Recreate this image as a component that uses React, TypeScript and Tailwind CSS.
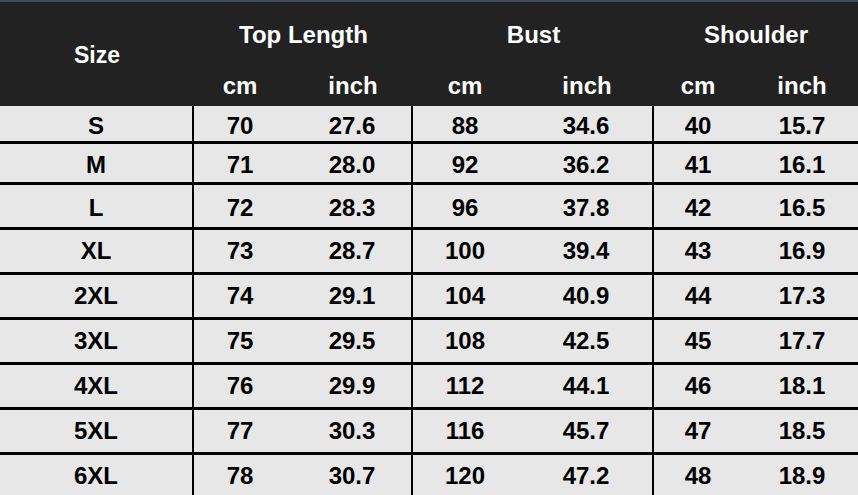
const rows = [
  { size: "S", v: ["70", "27.6", "88", "34.6", "40", "15.7"], h: "h-[35px]", pt: "pt-[4px]" },
  { size: "M", v: ["71", "28.0", "92", "36.2", "41", "16.1"], h: "h-[38px]", pt: "pt-[3px]" },
  { size: "L", v: ["72", "28.3", "96", "37.8", "42", "16.5"], h: "h-[42px]", pt: "pt-[4px]" },
  { size: "XL", v: ["73", "28.7", "100", "39.4", "43", "16.9"], h: "h-[42px]", pt: "pt-0" },
  { size: "2XL", v: ["74", "29.1", "104", "40.9", "44", "17.3"], h: "h-[42px]", pt: "pt-0" },
  { size: "3XL", v: ["75", "29.5", "108", "42.5", "45", "17.7"], h: "h-[42px]", pt: "pt-0" },
  { size: "4XL", v: ["76", "29.9", "112", "44.1", "46", "18.1"], h: "h-[42px]", pt: "pt-0" },
  { size: "5XL", v: ["77", "30.3", "116", "45.7", "47", "18.5"], h: "h-[42px]", pt: "pt-0" },
  { size: "6XL", v: ["78", "30.7", "120", "47.2", "48", "18.9"], h: "h-[42px]", pt: "pt-0" },
];

// sub-column classes: widths chosen so centred text lands on the reference columns
const cols = [
  "w-[92px]",
  "w-[127px] pl-[7px] border-r-2 border-black",
  "w-[104px]",
  "w-[137px] pl-[3px] border-r-2 border-black",
  "w-[88px]",
  "flex-1 pl-[4px]",
];

export default function App() {
  return (
    <div className="w-[858px] h-[495px] overflow-hidden bg-[#e7e7e7] font-['Liberation_Sans',Arial,sans-serif] font-bold">
      {/* Header */}
      <div className="flex h-[106px] border-t-2 border-[#3c4b57] bg-[#222222] text-white">
        <div className="flex w-[194px] items-center justify-center pt-[2px] text-[23px]">Size</div>
        <div className="flex w-[219px] flex-col">
          <div className="flex h-[64px] items-center justify-center pt-[2px] text-[24px]">Top Length</div>
          <div className="flex flex-1 text-[24px]">
            <div className="flex w-[92px] items-center justify-center">cm</div>
            <div className="flex flex-1 items-center justify-center pl-[7px]">inch</div>
          </div>
        </div>
        <div className="flex w-[241px] flex-col">
          <div className="flex h-[64px] items-center justify-center pt-[2px] text-[24px]">Bust</div>
          <div className="flex flex-1 text-[24px]">
            <div className="flex w-[104px] items-center justify-center">cm</div>
            <div className="flex flex-1 items-center justify-center pl-[3px]">inch</div>
          </div>
        </div>
        <div className="flex flex-1 flex-col">
          <div className="flex h-[64px] items-center justify-center pt-[2px] text-[24px]">Shoulder</div>
          <div className="flex flex-1 text-[24px]">
            <div className="flex w-[88px] items-center justify-center">cm</div>
            <div className="flex flex-1 items-center justify-center pl-[4px]">inch</div>
          </div>
        </div>
      </div>

      {/* Body */}
      {rows.map((r, i) => (
        <div
          key={r.size}
          className={`flex ${r.h} box-content text-[24px] text-black ${i < rows.length - 1 ? "border-b-[3px] border-black" : ""}`}
        >
          <div className={`flex w-[194px] items-center justify-center border-r-2 border-black ${r.pt}`}>{r.size}</div>
          {r.v.map((val, j) => (
            <div key={j} className={`flex items-center justify-center ${cols[j]} ${r.pt}`}>
              {val}
            </div>
          ))}
        </div>
      ))}
    </div>
  );
}
